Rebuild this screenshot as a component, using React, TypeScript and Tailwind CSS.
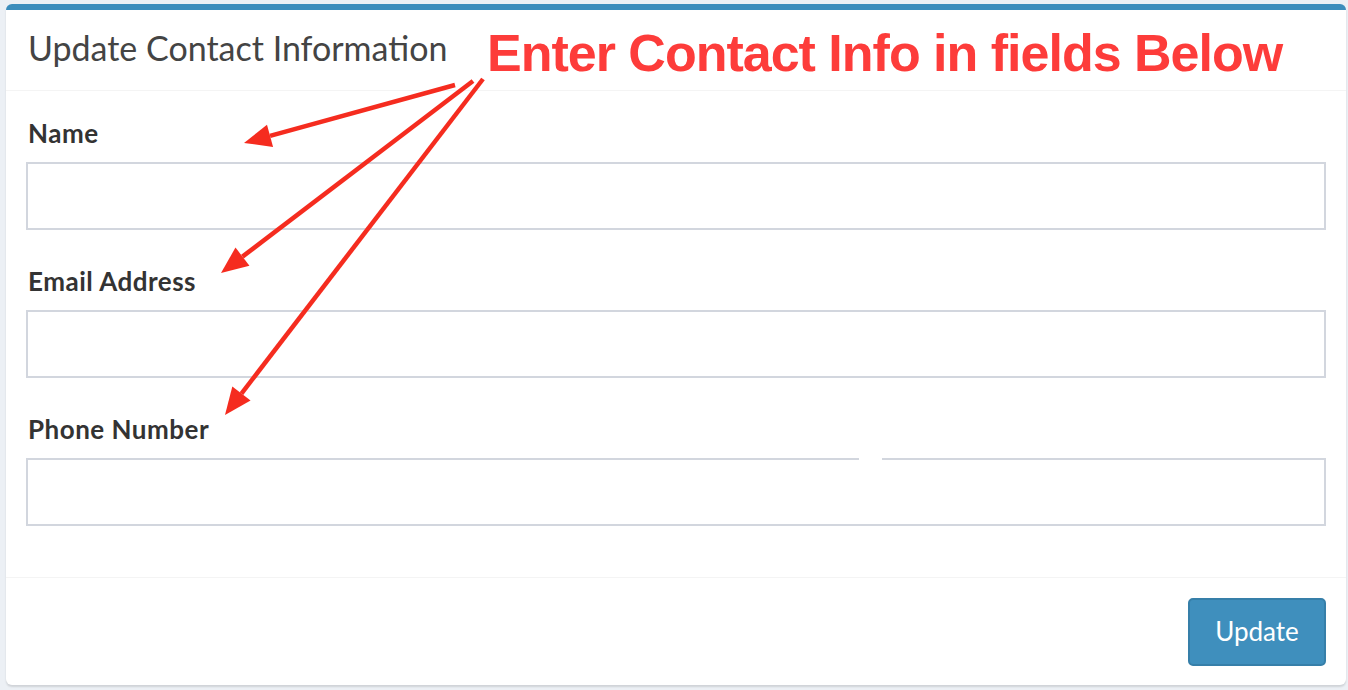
const fields = ["Name", "Email Address", "Phone Number"];

const arrows = [
  { tail: [455, 85], tip: [244, 143] },
  { tail: [473, 81], tip: [221, 273] },
  { tail: [483, 79], tip: [225, 415] },
];

function arrowParts(tail: number[], tip: number[], len = 27, half = 11.5) {
  const dx = tail[0] - tip[0];
  const dy = tail[1] - tip[1];
  const d = Math.hypot(dx, dy);
  const ux = dx / d;
  const uy = dy / d;
  const bx = tip[0] + ux * len;
  const by = tip[1] + uy * len;
  const px = -uy * half;
  const py = ux * half;
  return {
    line: { x1: tail[0], y1: tail[1], x2: bx, y2: by },
    head: `${tip[0]},${tip[1]} ${bx + px},${by + py} ${bx - px},${by - py}`,
  };
}

export default function App() {
  return (
    <div
      className="relative h-[690px] w-full overflow-hidden bg-[#ecf0f5] pl-[6px] pr-[2px] pt-1 text-[#333]"
      style={{ fontFamily: "Lato, 'Open Sans', sans-serif" }}
    >
      <div className="flex h-[681px] flex-col rounded-[6px] border-t-[6px] border-[#3c8dbc] bg-white shadow-[0_2px_2px_rgba(0,0,0,0.12)]">
        <header className="flex h-[81px] items-center border-b border-[#f4f4f4] px-[22px] pb-1">
          <h3 className="text-[34px] leading-none text-[#444]">Update Contact Information</h3>
        </header>

        <div className="flex-1 px-5 pt-[28px]">
          {fields.map((label) => (
            <div key={label} className="mb-[37px]">
              <label className="block h-[43px] px-[2px] text-[26px] font-bold leading-[29px] tracking-[0.5px] text-[#333]">
                {label}
              </label>
              <input
                type="text"
                className="block h-[68px] w-full border-2 border-[#d2d6de] bg-white px-4 text-[26px] outline-none"
              />
            </div>
          ))}
        </div>

        <footer className="flex h-[108px] items-center justify-end border-t border-[#f4f4f4] px-5">
          <button
            type="button"
            className="h-[68px] w-[138px] rounded-[5px] border-2 border-[#367fa9] bg-[#3f8fbd] text-[26px] text-white"
          >
            Update
          </button>
        </footer>
      </div>

      {/* annotation overlay */}
      <div
        className="absolute left-[487px] top-[27px] text-[52px] font-bold leading-[52px] tracking-[-1px] text-[#fd3c3a]"
        style={{ fontFamily: "'Liberation Sans', Arial, sans-serif" }}
      >
        Enter Contact Info in fields Below
      </div>
      <div className="absolute left-[859px] top-[456px] h-[4px] w-[23px] bg-white" />
      <svg className="pointer-events-none absolute left-0 top-0" width="1348" height="690">
        {arrows.map((a, i) => {
          const p = arrowParts(a.tail, a.tip);
          return (
            <g key={i}>
              <line {...p.line} stroke="#f52c1f" strokeWidth="4.5" />
              <polygon points={p.head} fill="#f52c1f" />
            </g>
          );
        })}
      </svg>
    </div>
  );
}
